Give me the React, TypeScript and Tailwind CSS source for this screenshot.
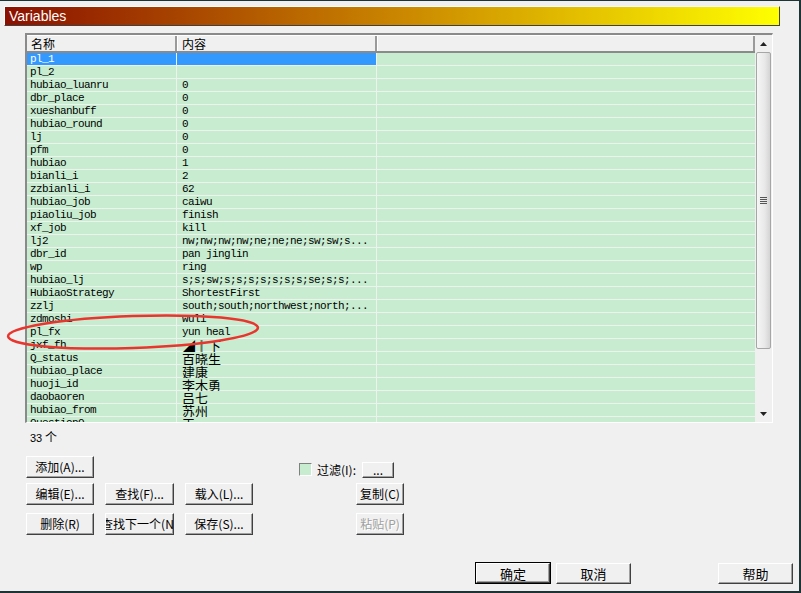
import React from 'react';

const rows: [string, string][] = [
  ['pl_1', ''],
  ['pl_2', ''],
  ['hubiao_luanru', '0'],
  ['dbr_place', '0'],
  ['xueshanbuff', '0'],
  ['hubiao_round', '0'],
  ['lj', '0'],
  ['pfm', '0'],
  ['hubiao', '1'],
  ['bianli_i', '2'],
  ['zzbianli_i', '62'],
  ['hubiao_job', 'caiwu'],
  ['piaoliu_job', 'finish'],
  ['xf_job', 'kill'],
  ['lj2', 'nw;nw;nw;nw;ne;ne;ne;sw;sw;s...'],
  ['dbr_id', 'pan jinglin'],
  ['wp', 'ring'],
  ['hubiao_lj', 's;s;sw;s;s;s;s;s;s;s;se;s;s;...'],
  ['HubiaoStrategy', 'ShortestFirst'],
  ['zzlj', 'south;south;northwest;north;...'],
  ['zdmoshi', 'wuli'],
  ['pl_fx', 'yun heal'],
  ['jxf_fh', '◢║下'],
  ['Q_status', '百晓生'],
  ['hubiao_place', '建康'],
  ['huoji_id', '李木勇'],
  ['daobaoren', '吕七'],
  ['hubiao_from', '苏州'],
  ['QuestionQ', '王'],
];

const mono = "font-['Liberation_Mono','Noto_Sans_CJK_SC',monospace] text-[11px] tracking-[-0.6px] leading-[11px]";
const cjk = "font-['Noto_Sans_CJK_SC',sans-serif]";
const hasCjk = (s: string) => /[\u4e00-\u9fff]/.test(s);

function Row({ name, value, selected }: { name: string; value: string; selected?: boolean }) {
  const cell = selected ? 'bg-[#3399ff] text-white' : 'bg-[#c8ecd0] text-black';
  return (
    <div className="flex h-[13px] shrink-0 border-b border-[#eef2ee]">
      <div className={`flex h-[12px] w-[150px] shrink-0 items-center overflow-hidden whitespace-nowrap border-r border-[#eef2ee] pl-[3px] pt-[1px] ${cell} ${mono}`}>
        {name}
      </div>
      <div className={`flex h-[12px] w-[200px] shrink-0 items-center whitespace-nowrap border-r border-[#eef2ee] pl-[5px] pt-[1px] ${cell} ${mono}`}>
        {hasCjk(value) ? (
          <span className={`${cjk} text-[13px] leading-[11px] tracking-normal`}>{value}</span>
        ) : (
          value
        )}
      </div>
      <div className="flex-1 bg-[#c8ecd0]" />
    </div>
  );
}

function Btn({
  children,
  className = '',
  disabled,
  isDefault,
}: {
  children: React.ReactNode;
  className?: string;
  disabled?: boolean;
  isDefault?: boolean;
}) {
  return (
    <div
      className={`flex shrink-0 items-center justify-center overflow-hidden whitespace-nowrap border border-t-white border-l-white border-b-[#404040] border-r-[#404040] bg-[#f0f0f0] text-[12px] leading-none shadow-[inset_-1px_-1px_0_#a0a0a0] ${cjk} ${
        isDefault ? 'outline outline-1 outline-black' : ''
      } ${disabled ? 'text-[#a0a0a0] [text-shadow:1px_1px_0_#fff]' : 'text-black'} ${className}`}
    >
      {children}
    </div>
  );
}

function ScrollBar() {
  return (
    <div className="flex w-[17px] shrink-0 flex-col bg-[#f0f0f0]">
      <div className="flex h-[17px] items-center justify-center">
        <svg width="7" height="4" viewBox="0 0 7 4">
          <path d="M3.5 0 L7 4 L0 4 Z" fill="#222" />
        </svg>
      </div>
      <div className="mx-[1px] flex h-[297px] items-center justify-center rounded-[2px] border border-[#a6a6a6] bg-[linear-gradient(to_right,#f6f6f6,#e8e8e8_60%,#d4d4d4)]">
        <div className="flex flex-col gap-[1px]">
          <div className="h-[1px] w-[7px] bg-[#555]" />
          <div className="h-[1px] w-[7px] bg-[#555]" />
          <div className="h-[1px] w-[7px] bg-[#555]" />
          <div className="h-[1px] w-[7px] bg-[#555]" />
        </div>
      </div>
      <div className="flex-1" />
      <div className="flex h-[17px] items-center justify-center">
        <svg width="7" height="4" viewBox="0 0 7 4">
          <path d="M0 0 L7 0 L3.5 4 Z" fill="#222" />
        </svg>
      </div>
    </div>
  );
}

export default function App() {
  return (
    <div className="relative flex h-[593px] w-[801px] flex-col overflow-hidden border-t border-r-2 border-b-2 border-[#1c3434] bg-[#f0f0f0]">
      {/* title */}
      <div className="ml-[4px] mt-[5px] flex h-[20px] w-[776px] items-center border border-t-white border-l-white border-b-[#404040] border-r-[#404040] bg-[linear-gradient(to_right,#8b1000,#c98400_50%,#ffff00)] pl-[4px] font-['Liberation_Sans',sans-serif] text-[14px] text-white">
        Variables
      </div>

      {/* list */}
      <div className="ml-[25px] mt-[7px] flex h-[390px] w-[748px] border-t-2 border-l-2 border-r border-b border-t-[#8a8a8a] border-l-[#8a8a8a] border-r-white border-b-white">
        <div className="flex flex-1 flex-col overflow-hidden">
          <div className="flex h-[18px] shrink-0 border-t border-white border-b-2 border-b-[#8a8a8a] bg-[#f0f0f0] text-[12px] leading-[15px]">
            <div className={`w-[150px] shrink-0 border-r-2 border-r-[#9a9a9a] pl-[4px] ${cjk}`}>名称</div>
            <div className={`w-[200px] shrink-0 border-l border-white border-r-2 border-r-[#9a9a9a] pl-[4px] ${cjk}`}>内容</div>
            <div className="flex-1 border-l border-white border-r-2 border-r-[#9a9a9a]" />
          </div>
          {rows.map(([n, v], i) => (
            <Row key={n} name={n} value={v} selected={i === 0} />
          ))}
        </div>
        <ScrollBar />
      </div>

      <div className={`ml-[30px] mt-[7px] h-[14px] text-[12px] leading-[14px] ${cjk}`}>
        <span className="font-['Liberation_Sans',sans-serif] text-[11px]">33</span> 个
      </div>

      {/* row 1 */}
      <div className="mt-[12px] flex h-[22px] items-start">
        <Btn className="ml-[26px] h-[22px] w-[68px]">添加(A)...</Btn>
        <div className="ml-[205px] mt-[7px] flex items-center">
          <div className="h-[13px] w-[13px] border border-t-[#808080] border-l-[#808080] border-r-white border-b-white bg-[#c8ecd0]" />
          <span className={`ml-[5px] text-[12px] leading-none ${cjk}`}>过滤(I):</span>
        </div>
        <Btn className="ml-[6px] mt-[6px] h-[16px] w-[32px]">...</Btn>
      </div>

      {/* row 2 */}
      <div className="mt-[5px] flex h-[22px] items-start">
        <Btn className="ml-[26px] h-[22px] w-[68px]">编辑(E)...</Btn>
        <Btn className="ml-[11px] h-[22px] w-[69px]">查找(F)...</Btn>
        <Btn className="ml-[11px] h-[22px] w-[68px]">载入(L)...</Btn>
        <Btn className="ml-[103px] h-[22px] w-[48px]">复制(C)</Btn>
      </div>

      {/* row 3 */}
      <div className="mt-[8px] flex h-[22px] items-start">
        <Btn className="ml-[26px] h-[22px] w-[68px]">删除(R)</Btn>
        <Btn className="ml-[11px] h-[22px] w-[69px]">查找下一个(N)</Btn>
        <Btn className="ml-[11px] h-[22px] w-[68px]">保存(S)...</Btn>
        <Btn className="ml-[103px] h-[22px] w-[48px]" disabled>
          粘贴(P)
        </Btn>
      </div>

      {/* bottom */}
      <div className="mt-[28px] flex h-[21px] items-start">
        <Btn className="ml-[476px] h-[20px] w-[74px] text-[13px]" isDefault>
          确定
        </Btn>
        <Btn className="ml-[6px] h-[21px] w-[75px] text-[13px]">取消</Btn>
        <Btn className="ml-[87px] h-[21px] w-[75px] text-[13px]">帮助</Btn>
      </div>

      {/* red annotation ellipse */}
      <svg className="pointer-events-none absolute left-0 top-0" width="801" height="593">
        <ellipse cx="133" cy="331" rx="125" ry="16" transform="rotate(-2 133 331)" fill="none" stroke="#e8352e" strokeWidth="2.5" />
      </svg>
    </div>
  );
}
